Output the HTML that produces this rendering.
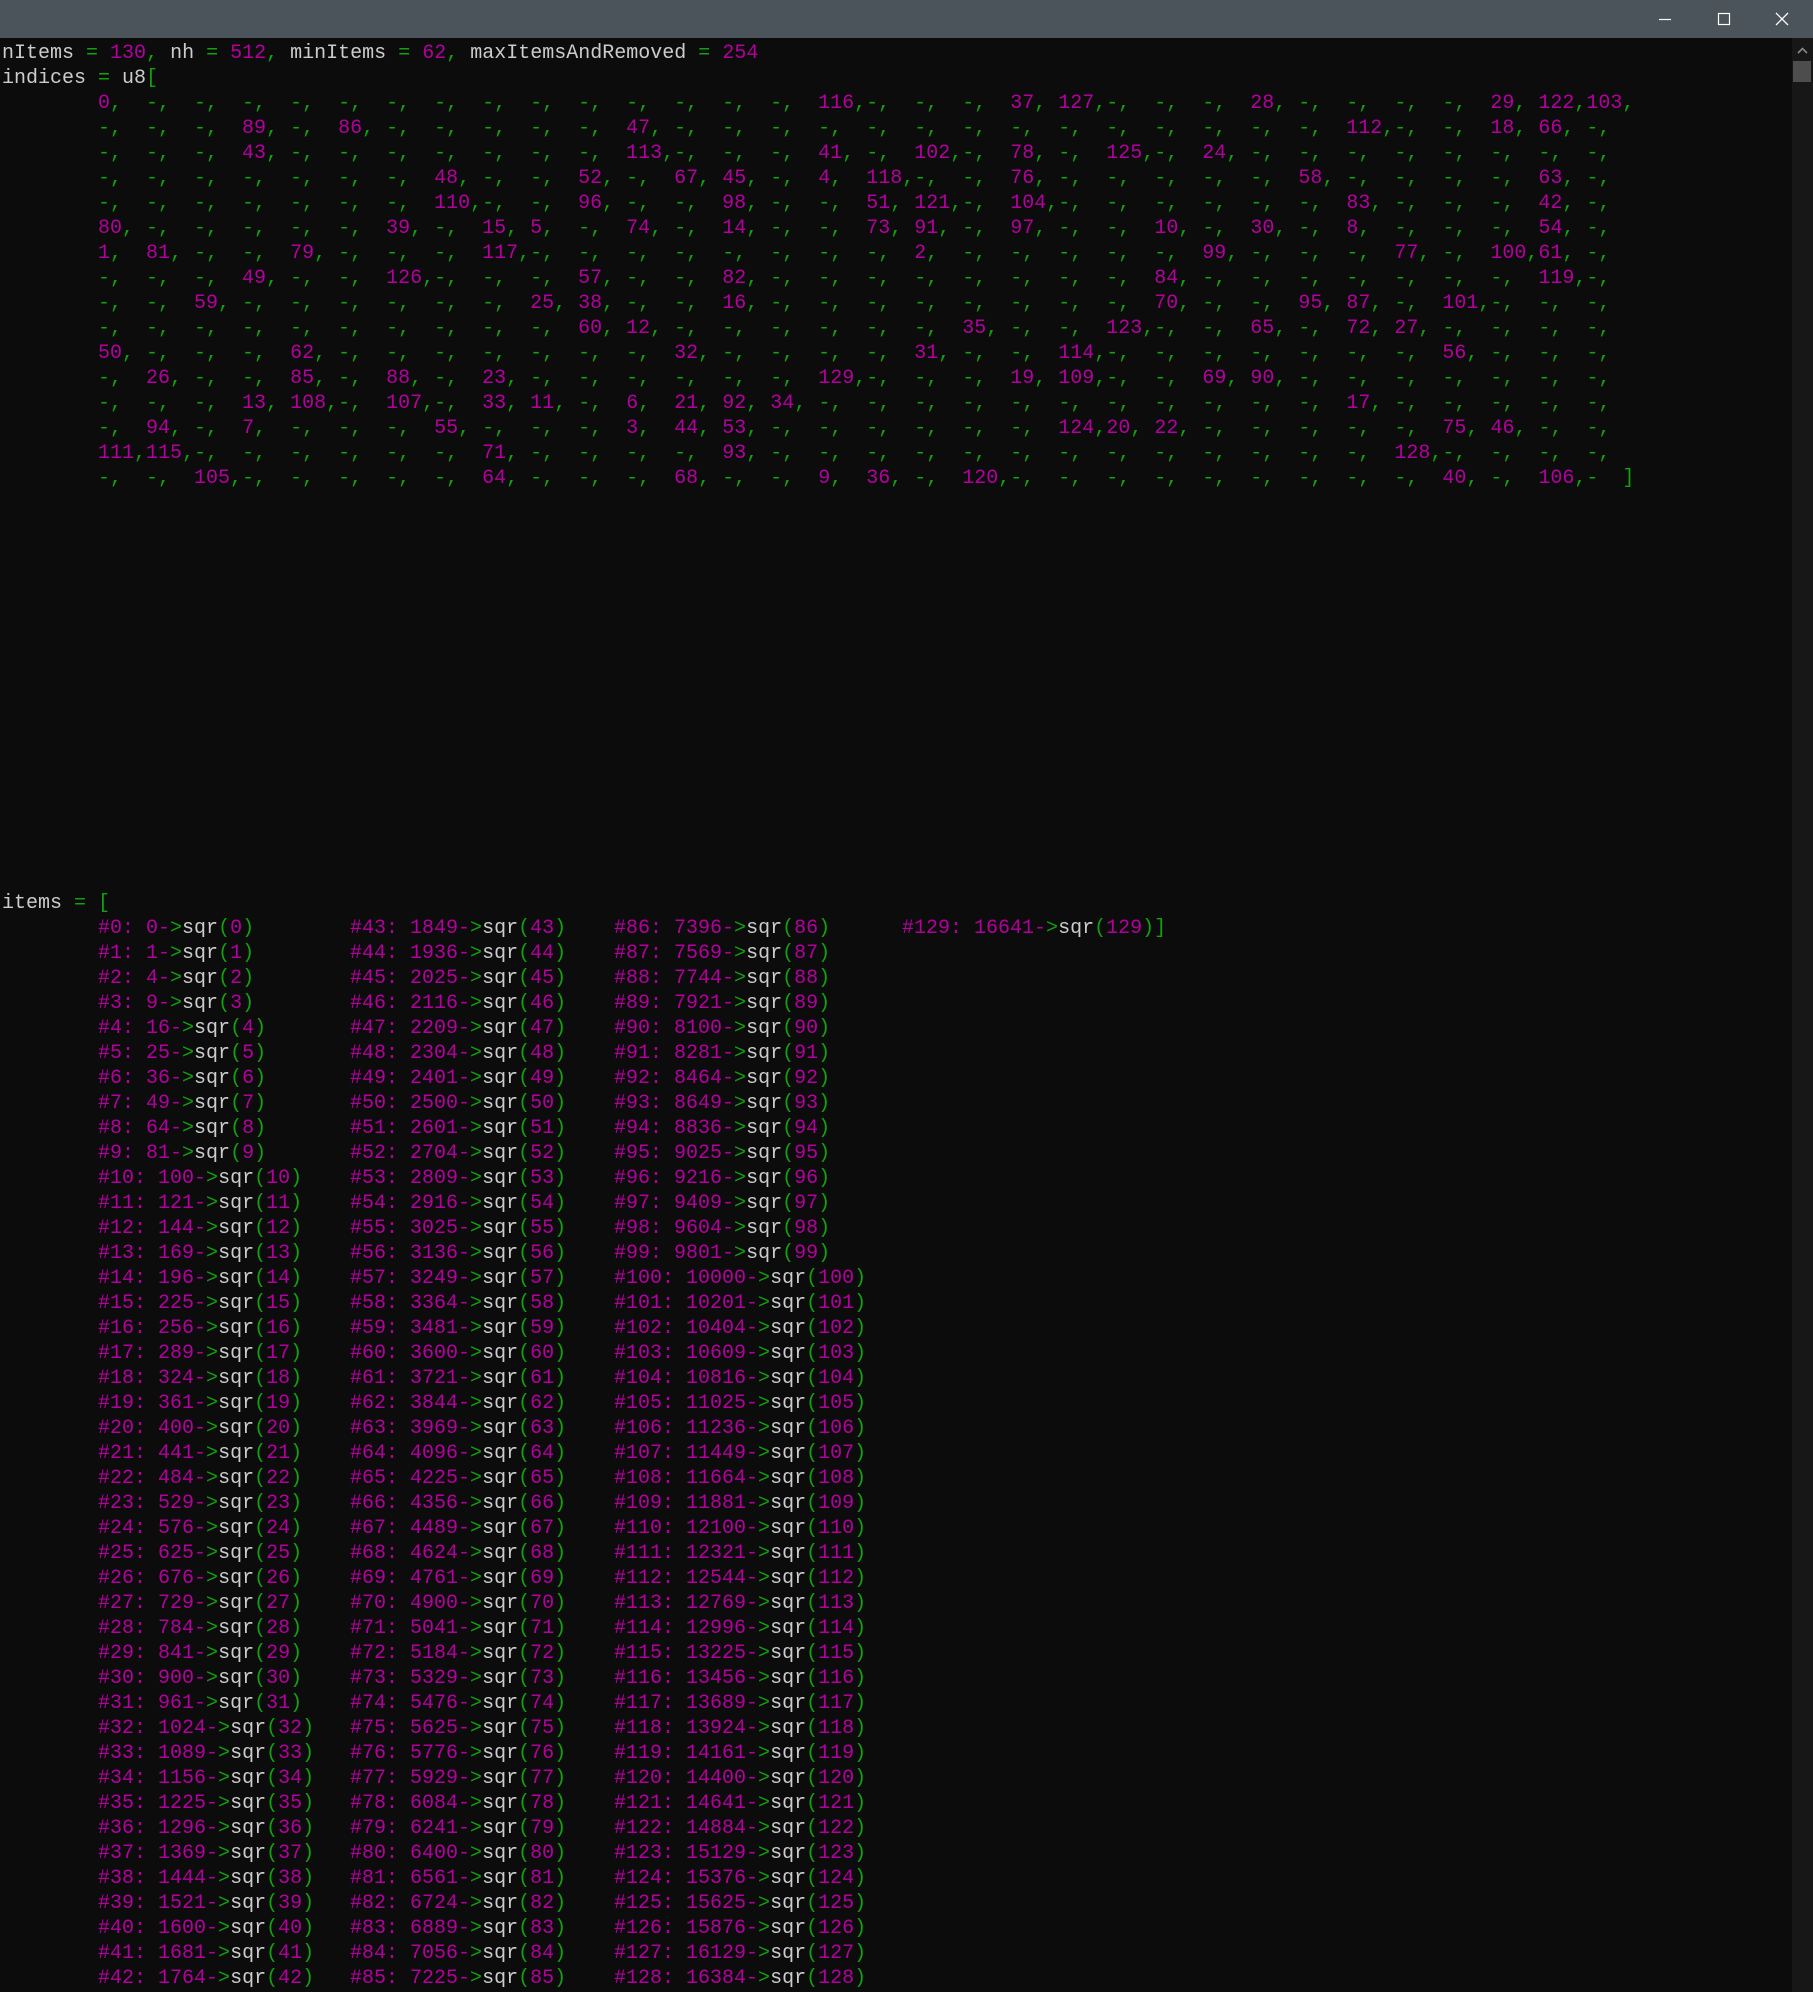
<!DOCTYPE html>
<html><head><meta charset="utf-8"><style>
html,body{margin:0;padding:0;background:#0c0c0c;}
body{width:1813px;height:1992px;position:relative;overflow:hidden;}
#tb{position:absolute;left:0;top:0;width:1813px;height:38px;background:#4b535b;}
#sb{position:absolute;left:1792px;top:38px;width:21px;height:1954px;background:#171717;}
#th{position:absolute;left:1793px;top:61px;width:18px;height:21px;background:#4d4d4d;}
pre{position:absolute;left:2px;top:41px;margin:0;font-family:"Liberation Mono",monospace;font-size:20px;line-height:25px;color:#cccccc;white-space:pre;}
b,a{color:#b4009e;font-weight:normal;text-decoration:none;}
g{color:#13a10e;}
x,y,z{display:inline-block;}
x{width:252px;}y{width:264px;}z{width:288px;}
</style></head><body>
<div id="tb">
<svg width="1813" height="38" style="position:absolute;left:0;top:0">
<line x1="1659" y1="19.5" x2="1671" y2="19.5" stroke="#fff" stroke-width="1.2"/>
<rect x="1718.5" y="13.5" width="11" height="11" fill="none" stroke="#fff" stroke-width="1.2"/>
<path d="M1776 13 L1788 25 M1788 13 L1776 25" stroke="#fff" stroke-width="1.3"/>
</svg></div>
<div id="sb"><svg width="21" height="20" style="position:absolute;left:0;top:3px"><path d="M6 12 L10.5 7.5 L15 12" fill="none" stroke="#888" stroke-width="1.6"/></svg></div>
<div id="th"></div>
<pre>nItems <g>=</g> <b>130</b><g>,</g> nh <g>=</g> <b>512</b><g>,</g> minItems <g>=</g> <b>62</b><g>,</g> maxItemsAndRemoved <g>=</g> <b>254</b>
indices <g>=</g> u8<g>[</g>
<g>        <b>0</b>,  -,  -,  -,  -,  -,  -,  -,  -,  -,  -,  -,  -,  -,  -,  <b>116</b>,-,  -,  -,  <b>37</b>, <b>127</b>,-,  -,  -,  <b>28</b>, -,  -,  -,  -,  <b>29</b>, <b>122</b>,<b>103</b>,
        -,  -,  -,  <b>89</b>, -,  <b>86</b>, -,  -,  -,  -,  -,  <b>47</b>, -,  -,  -,  -,  -,  -,  -,  -,  -,  -,  -,  -,  -,  -,  <b>112</b>,-,  -,  <b>18</b>, <b>66</b>, -,
        -,  -,  -,  <b>43</b>, -,  -,  -,  -,  -,  -,  -,  <b>113</b>,-,  -,  -,  <b>41</b>, -,  <b>102</b>,-,  <b>78</b>, -,  <b>125</b>,-,  <b>24</b>, -,  -,  -,  -,  -,  -,  -,  -,
        -,  -,  -,  -,  -,  -,  -,  <b>48</b>, -,  -,  <b>52</b>, -,  <b>67</b>, <b>45</b>, -,  <b>4</b>,  <b>118</b>,-,  -,  <b>76</b>, -,  -,  -,  -,  -,  <b>58</b>, -,  -,  -,  -,  <b>63</b>, -,
        -,  -,  -,  -,  -,  -,  -,  <b>110</b>,-,  -,  <b>96</b>, -,  -,  <b>98</b>, -,  -,  <b>51</b>, <b>121</b>,-,  <b>104</b>,-,  -,  -,  -,  -,  -,  <b>83</b>, -,  -,  -,  <b>42</b>, -,
        <b>80</b>, -,  -,  -,  -,  -,  <b>39</b>, -,  <b>15</b>, <b>5</b>,  -,  <b>74</b>, -,  <b>14</b>, -,  -,  <b>73</b>, <b>91</b>, -,  <b>97</b>, -,  -,  <b>10</b>, -,  <b>30</b>, -,  <b>8</b>,  -,  -,  -,  <b>54</b>, -,
        <b>1</b>,  <b>81</b>, -,  -,  <b>79</b>, -,  -,  -,  <b>117</b>,-,  -,  -,  -,  -,  -,  -,  -,  <b>2</b>,  -,  -,  -,  -,  -,  <b>99</b>, -,  -,  -,  <b>77</b>, -,  <b>100</b>,<b>61</b>, -,
        -,  -,  -,  <b>49</b>, -,  -,  <b>126</b>,-,  -,  -,  <b>57</b>, -,  -,  <b>82</b>, -,  -,  -,  -,  -,  -,  -,  -,  <b>84</b>, -,  -,  -,  -,  -,  -,  -,  <b>119</b>,-,
        -,  -,  <b>59</b>, -,  -,  -,  -,  -,  -,  <b>25</b>, <b>38</b>, -,  -,  <b>16</b>, -,  -,  -,  -,  -,  -,  -,  -,  <b>70</b>, -,  -,  <b>95</b>, <b>87</b>, -,  <b>101</b>,-,  -,  -,
        -,  -,  -,  -,  -,  -,  -,  -,  -,  -,  <b>60</b>, <b>12</b>, -,  -,  -,  -,  -,  -,  <b>35</b>, -,  -,  <b>123</b>,-,  -,  <b>65</b>, -,  <b>72</b>, <b>27</b>, -,  -,  -,  -,
        <b>50</b>, -,  -,  -,  <b>62</b>, -,  -,  -,  -,  -,  -,  -,  <b>32</b>, -,  -,  -,  -,  <b>31</b>, -,  -,  <b>114</b>,-,  -,  -,  -,  -,  -,  -,  <b>56</b>, -,  -,  -,
        -,  <b>26</b>, -,  -,  <b>85</b>, -,  <b>88</b>, -,  <b>23</b>, -,  -,  -,  -,  -,  -,  <b>129</b>,-,  -,  -,  <b>19</b>, <b>109</b>,-,  -,  <b>69</b>, <b>90</b>, -,  -,  -,  -,  -,  -,  -,
        -,  -,  -,  <b>13</b>, <b>108</b>,-,  <b>107</b>,-,  <b>33</b>, <b>11</b>, -,  <b>6</b>,  <b>21</b>, <b>92</b>, <b>34</b>, -,  -,  -,  -,  -,  -,  -,  -,  -,  -,  -,  <b>17</b>, -,  -,  -,  -,  -,
        -,  <b>94</b>, -,  <b>7</b>,  -,  -,  -,  <b>55</b>, -,  -,  -,  <b>3</b>,  <b>44</b>, <b>53</b>, -,  -,  -,  -,  -,  -,  <b>124</b>,<b>20</b>, <b>22</b>, -,  -,  -,  -,  -,  <b>75</b>, <b>46</b>, -,  -,
        <b>111</b>,<b>115</b>,-,  -,  -,  -,  -,  -,  <b>71</b>, -,  -,  -,  -,  <b>93</b>, -,  -,  -,  -,  -,  -,  -,  -,  -,  -,  -,  -,  -,  <b>128</b>,-,  -,  -,  -,
        -,  -,  <b>105</b>,-,  -,  -,  -,  -,  <b>64</b>, -,  -,  -,  <b>68</b>, -,  -,  <b>9</b>,  <b>36</b>, -,  <b>120</b>,-,  -,  -,  -,  -,  -,  -,  -,  -,  <b>40</b>, -,  <b>106</b>,-  ]</g>
















items <g>=</g> <g>[</g>
        <x><a>#0: 0-</a><g>&gt;</g>sqr<g>(</g><a>0</a><g>)</g></x><y><a>#43: 1849-</a><g>&gt;</g>sqr<g>(</g><a>43</a><g>)</g></y><z><a>#86: 7396-</a><g>&gt;</g>sqr<g>(</g><a>86</a><g>)</g></z><a>#129: 16641-</a><g>&gt;</g>sqr<g>(</g><a>129</a><g>)]</g>
        <x><a>#1: 1-</a><g>&gt;</g>sqr<g>(</g><a>1</a><g>)</g></x><y><a>#44: 1936-</a><g>&gt;</g>sqr<g>(</g><a>44</a><g>)</g></y><z><a>#87: 7569-</a><g>&gt;</g>sqr<g>(</g><a>87</a><g>)</g></z>
        <x><a>#2: 4-</a><g>&gt;</g>sqr<g>(</g><a>2</a><g>)</g></x><y><a>#45: 2025-</a><g>&gt;</g>sqr<g>(</g><a>45</a><g>)</g></y><z><a>#88: 7744-</a><g>&gt;</g>sqr<g>(</g><a>88</a><g>)</g></z>
        <x><a>#3: 9-</a><g>&gt;</g>sqr<g>(</g><a>3</a><g>)</g></x><y><a>#46: 2116-</a><g>&gt;</g>sqr<g>(</g><a>46</a><g>)</g></y><z><a>#89: 7921-</a><g>&gt;</g>sqr<g>(</g><a>89</a><g>)</g></z>
        <x><a>#4: 16-</a><g>&gt;</g>sqr<g>(</g><a>4</a><g>)</g></x><y><a>#47: 2209-</a><g>&gt;</g>sqr<g>(</g><a>47</a><g>)</g></y><z><a>#90: 8100-</a><g>&gt;</g>sqr<g>(</g><a>90</a><g>)</g></z>
        <x><a>#5: 25-</a><g>&gt;</g>sqr<g>(</g><a>5</a><g>)</g></x><y><a>#48: 2304-</a><g>&gt;</g>sqr<g>(</g><a>48</a><g>)</g></y><z><a>#91: 8281-</a><g>&gt;</g>sqr<g>(</g><a>91</a><g>)</g></z>
        <x><a>#6: 36-</a><g>&gt;</g>sqr<g>(</g><a>6</a><g>)</g></x><y><a>#49: 2401-</a><g>&gt;</g>sqr<g>(</g><a>49</a><g>)</g></y><z><a>#92: 8464-</a><g>&gt;</g>sqr<g>(</g><a>92</a><g>)</g></z>
        <x><a>#7: 49-</a><g>&gt;</g>sqr<g>(</g><a>7</a><g>)</g></x><y><a>#50: 2500-</a><g>&gt;</g>sqr<g>(</g><a>50</a><g>)</g></y><z><a>#93: 8649-</a><g>&gt;</g>sqr<g>(</g><a>93</a><g>)</g></z>
        <x><a>#8: 64-</a><g>&gt;</g>sqr<g>(</g><a>8</a><g>)</g></x><y><a>#51: 2601-</a><g>&gt;</g>sqr<g>(</g><a>51</a><g>)</g></y><z><a>#94: 8836-</a><g>&gt;</g>sqr<g>(</g><a>94</a><g>)</g></z>
        <x><a>#9: 81-</a><g>&gt;</g>sqr<g>(</g><a>9</a><g>)</g></x><y><a>#52: 2704-</a><g>&gt;</g>sqr<g>(</g><a>52</a><g>)</g></y><z><a>#95: 9025-</a><g>&gt;</g>sqr<g>(</g><a>95</a><g>)</g></z>
        <x><a>#10: 100-</a><g>&gt;</g>sqr<g>(</g><a>10</a><g>)</g></x><y><a>#53: 2809-</a><g>&gt;</g>sqr<g>(</g><a>53</a><g>)</g></y><z><a>#96: 9216-</a><g>&gt;</g>sqr<g>(</g><a>96</a><g>)</g></z>
        <x><a>#11: 121-</a><g>&gt;</g>sqr<g>(</g><a>11</a><g>)</g></x><y><a>#54: 2916-</a><g>&gt;</g>sqr<g>(</g><a>54</a><g>)</g></y><z><a>#97: 9409-</a><g>&gt;</g>sqr<g>(</g><a>97</a><g>)</g></z>
        <x><a>#12: 144-</a><g>&gt;</g>sqr<g>(</g><a>12</a><g>)</g></x><y><a>#55: 3025-</a><g>&gt;</g>sqr<g>(</g><a>55</a><g>)</g></y><z><a>#98: 9604-</a><g>&gt;</g>sqr<g>(</g><a>98</a><g>)</g></z>
        <x><a>#13: 169-</a><g>&gt;</g>sqr<g>(</g><a>13</a><g>)</g></x><y><a>#56: 3136-</a><g>&gt;</g>sqr<g>(</g><a>56</a><g>)</g></y><z><a>#99: 9801-</a><g>&gt;</g>sqr<g>(</g><a>99</a><g>)</g></z>
        <x><a>#14: 196-</a><g>&gt;</g>sqr<g>(</g><a>14</a><g>)</g></x><y><a>#57: 3249-</a><g>&gt;</g>sqr<g>(</g><a>57</a><g>)</g></y><z><a>#100: 10000-</a><g>&gt;</g>sqr<g>(</g><a>100</a><g>)</g></z>
        <x><a>#15: 225-</a><g>&gt;</g>sqr<g>(</g><a>15</a><g>)</g></x><y><a>#58: 3364-</a><g>&gt;</g>sqr<g>(</g><a>58</a><g>)</g></y><z><a>#101: 10201-</a><g>&gt;</g>sqr<g>(</g><a>101</a><g>)</g></z>
        <x><a>#16: 256-</a><g>&gt;</g>sqr<g>(</g><a>16</a><g>)</g></x><y><a>#59: 3481-</a><g>&gt;</g>sqr<g>(</g><a>59</a><g>)</g></y><z><a>#102: 10404-</a><g>&gt;</g>sqr<g>(</g><a>102</a><g>)</g></z>
        <x><a>#17: 289-</a><g>&gt;</g>sqr<g>(</g><a>17</a><g>)</g></x><y><a>#60: 3600-</a><g>&gt;</g>sqr<g>(</g><a>60</a><g>)</g></y><z><a>#103: 10609-</a><g>&gt;</g>sqr<g>(</g><a>103</a><g>)</g></z>
        <x><a>#18: 324-</a><g>&gt;</g>sqr<g>(</g><a>18</a><g>)</g></x><y><a>#61: 3721-</a><g>&gt;</g>sqr<g>(</g><a>61</a><g>)</g></y><z><a>#104: 10816-</a><g>&gt;</g>sqr<g>(</g><a>104</a><g>)</g></z>
        <x><a>#19: 361-</a><g>&gt;</g>sqr<g>(</g><a>19</a><g>)</g></x><y><a>#62: 3844-</a><g>&gt;</g>sqr<g>(</g><a>62</a><g>)</g></y><z><a>#105: 11025-</a><g>&gt;</g>sqr<g>(</g><a>105</a><g>)</g></z>
        <x><a>#20: 400-</a><g>&gt;</g>sqr<g>(</g><a>20</a><g>)</g></x><y><a>#63: 3969-</a><g>&gt;</g>sqr<g>(</g><a>63</a><g>)</g></y><z><a>#106: 11236-</a><g>&gt;</g>sqr<g>(</g><a>106</a><g>)</g></z>
        <x><a>#21: 441-</a><g>&gt;</g>sqr<g>(</g><a>21</a><g>)</g></x><y><a>#64: 4096-</a><g>&gt;</g>sqr<g>(</g><a>64</a><g>)</g></y><z><a>#107: 11449-</a><g>&gt;</g>sqr<g>(</g><a>107</a><g>)</g></z>
        <x><a>#22: 484-</a><g>&gt;</g>sqr<g>(</g><a>22</a><g>)</g></x><y><a>#65: 4225-</a><g>&gt;</g>sqr<g>(</g><a>65</a><g>)</g></y><z><a>#108: 11664-</a><g>&gt;</g>sqr<g>(</g><a>108</a><g>)</g></z>
        <x><a>#23: 529-</a><g>&gt;</g>sqr<g>(</g><a>23</a><g>)</g></x><y><a>#66: 4356-</a><g>&gt;</g>sqr<g>(</g><a>66</a><g>)</g></y><z><a>#109: 11881-</a><g>&gt;</g>sqr<g>(</g><a>109</a><g>)</g></z>
        <x><a>#24: 576-</a><g>&gt;</g>sqr<g>(</g><a>24</a><g>)</g></x><y><a>#67: 4489-</a><g>&gt;</g>sqr<g>(</g><a>67</a><g>)</g></y><z><a>#110: 12100-</a><g>&gt;</g>sqr<g>(</g><a>110</a><g>)</g></z>
        <x><a>#25: 625-</a><g>&gt;</g>sqr<g>(</g><a>25</a><g>)</g></x><y><a>#68: 4624-</a><g>&gt;</g>sqr<g>(</g><a>68</a><g>)</g></y><z><a>#111: 12321-</a><g>&gt;</g>sqr<g>(</g><a>111</a><g>)</g></z>
        <x><a>#26: 676-</a><g>&gt;</g>sqr<g>(</g><a>26</a><g>)</g></x><y><a>#69: 4761-</a><g>&gt;</g>sqr<g>(</g><a>69</a><g>)</g></y><z><a>#112: 12544-</a><g>&gt;</g>sqr<g>(</g><a>112</a><g>)</g></z>
        <x><a>#27: 729-</a><g>&gt;</g>sqr<g>(</g><a>27</a><g>)</g></x><y><a>#70: 4900-</a><g>&gt;</g>sqr<g>(</g><a>70</a><g>)</g></y><z><a>#113: 12769-</a><g>&gt;</g>sqr<g>(</g><a>113</a><g>)</g></z>
        <x><a>#28: 784-</a><g>&gt;</g>sqr<g>(</g><a>28</a><g>)</g></x><y><a>#71: 5041-</a><g>&gt;</g>sqr<g>(</g><a>71</a><g>)</g></y><z><a>#114: 12996-</a><g>&gt;</g>sqr<g>(</g><a>114</a><g>)</g></z>
        <x><a>#29: 841-</a><g>&gt;</g>sqr<g>(</g><a>29</a><g>)</g></x><y><a>#72: 5184-</a><g>&gt;</g>sqr<g>(</g><a>72</a><g>)</g></y><z><a>#115: 13225-</a><g>&gt;</g>sqr<g>(</g><a>115</a><g>)</g></z>
        <x><a>#30: 900-</a><g>&gt;</g>sqr<g>(</g><a>30</a><g>)</g></x><y><a>#73: 5329-</a><g>&gt;</g>sqr<g>(</g><a>73</a><g>)</g></y><z><a>#116: 13456-</a><g>&gt;</g>sqr<g>(</g><a>116</a><g>)</g></z>
        <x><a>#31: 961-</a><g>&gt;</g>sqr<g>(</g><a>31</a><g>)</g></x><y><a>#74: 5476-</a><g>&gt;</g>sqr<g>(</g><a>74</a><g>)</g></y><z><a>#117: 13689-</a><g>&gt;</g>sqr<g>(</g><a>117</a><g>)</g></z>
        <x><a>#32: 1024-</a><g>&gt;</g>sqr<g>(</g><a>32</a><g>)</g></x><y><a>#75: 5625-</a><g>&gt;</g>sqr<g>(</g><a>75</a><g>)</g></y><z><a>#118: 13924-</a><g>&gt;</g>sqr<g>(</g><a>118</a><g>)</g></z>
        <x><a>#33: 1089-</a><g>&gt;</g>sqr<g>(</g><a>33</a><g>)</g></x><y><a>#76: 5776-</a><g>&gt;</g>sqr<g>(</g><a>76</a><g>)</g></y><z><a>#119: 14161-</a><g>&gt;</g>sqr<g>(</g><a>119</a><g>)</g></z>
        <x><a>#34: 1156-</a><g>&gt;</g>sqr<g>(</g><a>34</a><g>)</g></x><y><a>#77: 5929-</a><g>&gt;</g>sqr<g>(</g><a>77</a><g>)</g></y><z><a>#120: 14400-</a><g>&gt;</g>sqr<g>(</g><a>120</a><g>)</g></z>
        <x><a>#35: 1225-</a><g>&gt;</g>sqr<g>(</g><a>35</a><g>)</g></x><y><a>#78: 6084-</a><g>&gt;</g>sqr<g>(</g><a>78</a><g>)</g></y><z><a>#121: 14641-</a><g>&gt;</g>sqr<g>(</g><a>121</a><g>)</g></z>
        <x><a>#36: 1296-</a><g>&gt;</g>sqr<g>(</g><a>36</a><g>)</g></x><y><a>#79: 6241-</a><g>&gt;</g>sqr<g>(</g><a>79</a><g>)</g></y><z><a>#122: 14884-</a><g>&gt;</g>sqr<g>(</g><a>122</a><g>)</g></z>
        <x><a>#37: 1369-</a><g>&gt;</g>sqr<g>(</g><a>37</a><g>)</g></x><y><a>#80: 6400-</a><g>&gt;</g>sqr<g>(</g><a>80</a><g>)</g></y><z><a>#123: 15129-</a><g>&gt;</g>sqr<g>(</g><a>123</a><g>)</g></z>
        <x><a>#38: 1444-</a><g>&gt;</g>sqr<g>(</g><a>38</a><g>)</g></x><y><a>#81: 6561-</a><g>&gt;</g>sqr<g>(</g><a>81</a><g>)</g></y><z><a>#124: 15376-</a><g>&gt;</g>sqr<g>(</g><a>124</a><g>)</g></z>
        <x><a>#39: 1521-</a><g>&gt;</g>sqr<g>(</g><a>39</a><g>)</g></x><y><a>#82: 6724-</a><g>&gt;</g>sqr<g>(</g><a>82</a><g>)</g></y><z><a>#125: 15625-</a><g>&gt;</g>sqr<g>(</g><a>125</a><g>)</g></z>
        <x><a>#40: 1600-</a><g>&gt;</g>sqr<g>(</g><a>40</a><g>)</g></x><y><a>#83: 6889-</a><g>&gt;</g>sqr<g>(</g><a>83</a><g>)</g></y><z><a>#126: 15876-</a><g>&gt;</g>sqr<g>(</g><a>126</a><g>)</g></z>
        <x><a>#41: 1681-</a><g>&gt;</g>sqr<g>(</g><a>41</a><g>)</g></x><y><a>#84: 7056-</a><g>&gt;</g>sqr<g>(</g><a>84</a><g>)</g></y><z><a>#127: 16129-</a><g>&gt;</g>sqr<g>(</g><a>127</a><g>)</g></z>
        <x><a>#42: 1764-</a><g>&gt;</g>sqr<g>(</g><a>42</a><g>)</g></x><y><a>#85: 7225-</a><g>&gt;</g>sqr<g>(</g><a>85</a><g>)</g></y><z><a>#128: 16384-</a><g>&gt;</g>sqr<g>(</g><a>128</a><g>)</g></z></pre>
</body></html>
